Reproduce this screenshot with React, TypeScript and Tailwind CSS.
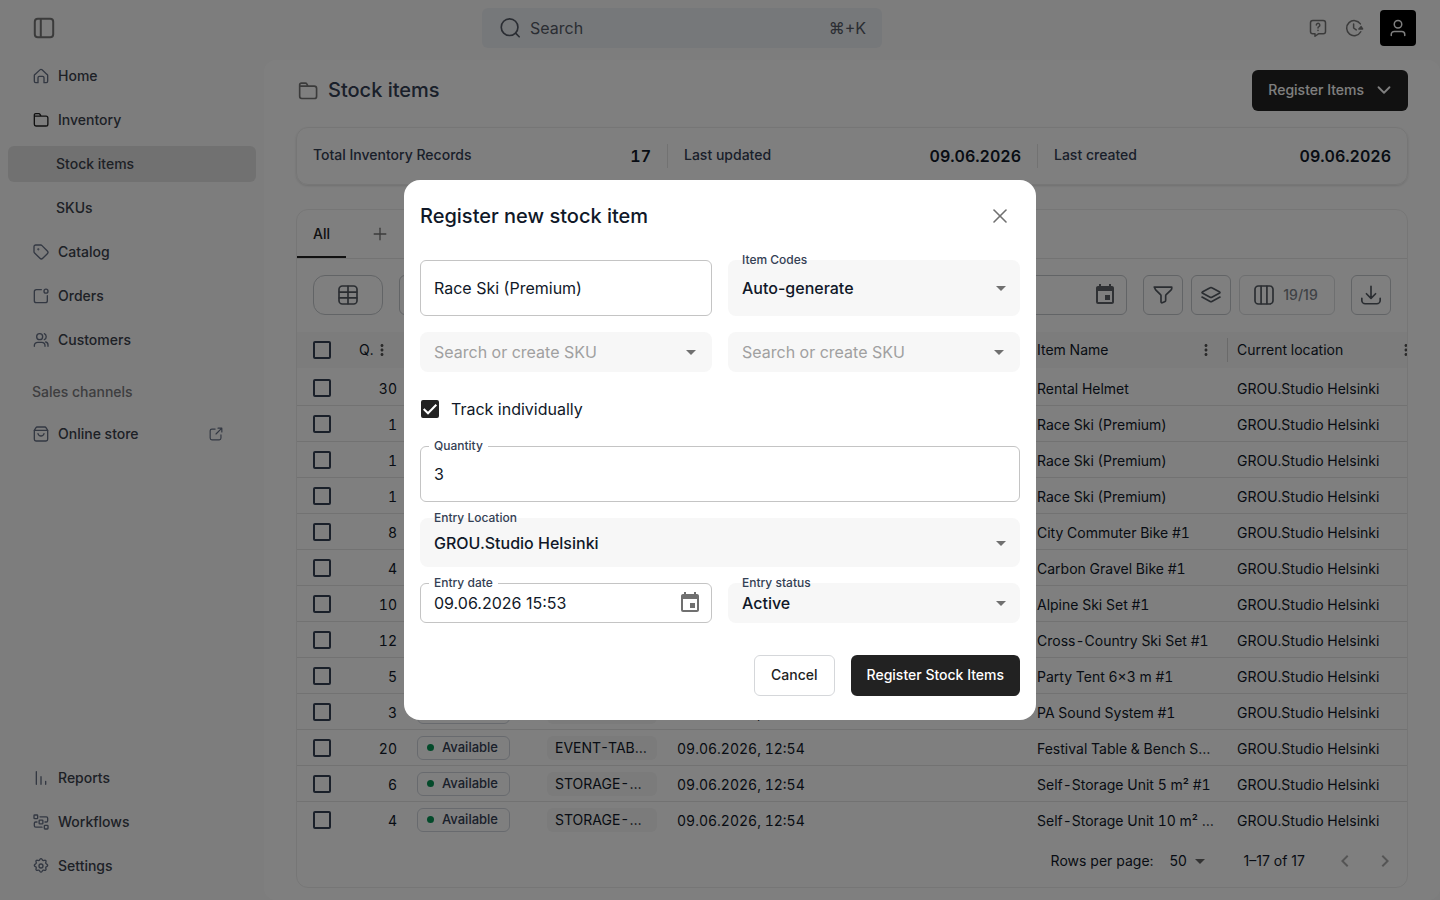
import { ReactNode, useState } from "react";
import clsx from "clsx";
import { ChevronDown, Plus, X } from "lucide-react";
import { MdArrowDropDown, MdChevronLeft, MdChevronRight, MdEvent, MdMoreVert } from "react-icons/md";

const icons: Record<string, ReactNode> = {
  panel: (
    <>
      <rect x="2.8" y="2.8" width="18.4" height="18.4" rx="3" />
      <path d="M8.8 3v18" />
    </>
  ),
  home: <path d="M3 9.6 10.4 2.8a2.4 2.4 0 0 1 3.2 0L21 9.6a2 2 0 0 1 1 1.8V20a2 2 0 0 1-2 2h-3.5v-7.5a2 2 0 0 0-2-2h-5a2 2 0 0 0-2 2V22H4a2 2 0 0 1-2-2v-8.600a2 2 0 0 1 1-1.800z" />,
  folder: <path d="M2 8V4.500a2 2 0 0 1 2-2h4.800a2 2 0 0 1 1.700 1L12 6.200H2.500M12 6.200h7.500a2.800 2.800 0 0 1 2.800 2.800v9.200a2.800 2.800 0 0 1-2.800 2.800h-15A2.800 2.800 0 0 1 2 18.200V6" />,
  tag: (
    <>
      <path d="M1.500 4a2.500 2.500 0 0 1 2.500-2.500h7.500a3 3 0 0 1 2 .9l8 8a3 3 0 0 1 0 4.200l-6.900 6.900a3 3 0 0 1-4.200 0l-8-8a3 3 0 0 1-.9-2z" />
      <circle cx="8" cy="8" r=".6" />
    </>
  ),
  orders: (
    <>
      <path d="M12.500 2.500H5A3 3 0 0 0 2 5.500V19a3 3 0 0 0 3 3h13.500a3 3 0 0 0 3-3v-7.500" />
      <circle cx="19.500" cy="4.800" r="3" />
    </>
  ),
  customers: (
    <>
      <circle cx="10" cy="7" r="4.500" />
      <path d="M17 2.500a5 5 0 0 1 0 9M2 21.500v-1a5 5 0 0 1 5-5h6a5 5 0 0 1 5 5v1M19 15a4.500 4.500 0 0 1 3.500 4.500v2" />
    </>
  ),
  store: (
    <>
      <path d="M2 6.500 4.500 2.600A2 2 0 0 1 6.200 1.500h11.600a2 2 0 0 1 1.700 1.100L22 6.500V20a2.500 2.500 0 0 1-2.500 2.500h-15A2.500 2.500 0 0 1 2 20z" />
      <path d="M2 6.500h20M7.500 11.500c.6 2.200 2.300 3.500 4.500 3.500s3.900-1.300 4.500-3.500" />
    </>
  ),
  external: <path d="M10.500 3.500H5a3 3 0 0 0-3 3V19a3 3 0 0 0 3 3h12.500a3 3 0 0 0 3-3v-5.500M15.500 2H22v6.500M22 2 12 12" />,
  reports: <path d="M5 2.500v19M12 10v11.500M19 17v4.500" />,
  workflows: (
    <>
      <rect x="1.500" y="1.500" width="5.500" height="5.500" rx="1" />
      <rect x="9.200" y="9.200" width="5.600" height="5.600" rx="1" />
      <rect x="17" y="17" width="5.500" height="5.500" rx="1" />
      <path d="M10.500 4.200H20a2 2 0 0 1 2 2V10a2 2 0 0 1-2 2h-2M13.500 19.800H4a2 2 0 0 1-2-2V14a2 2 0 0 1 2-2h2" />
    </>
  ),
  settings: (
    <>
      <circle cx="12" cy="12" r="3" />
      <path d="m10 2.800.5-.9a1.700 1.700 0 0 1 3 0l.5.900a2 2 0 0 0 2.400.9l1-.3a1.700 1.700 0 0 1 2.100 2.100l-.3 1a2 2 0 0 0 1 2.500l.9.500a1.700 1.700 0 0 1 0 3l-.9.500a2 2 0 0 0-1 2.500l.3 1a1.700 1.700 0 0 1-2.100 2.100l-1-.3a2 2 0 0 0-2.400 1l-.5.900a1.700 1.700 0 0 1-3 0l-.5-.9a2 2 0 0 0-2.400-1l-1 .3a1.700 1.700 0 0 1-2.100-2.100l.3-1a2 2 0 0 0-1-2.500l-.9-.5a1.700 1.700 0 0 1 0-3l.9-.5a2 2 0 0 0 1-2.500l-.3-1a1.700 1.700 0 0 1 2.100-2.100l1 .3a2 2 0 0 0 2.400-.9z" />
    </>
  ),
  search: (
    <>
      <circle cx="11.500" cy="11" r="10" />
      <path d="m19 18.500 4 4" />
    </>
  ),
  help: (
    <>
      <path d="M5 2h14a3 3 0 0 1 3 3v11.500a3 3 0 0 1-3 3h-6L8 23v-3.500H5a3 3 0 0 1-3-3V5a3 3 0 0 1 3-3z" />
      <path d="M9.800 8a2.300 2.300 0 1 1 3.400 2.100c-.8.400-1.200.9-1.200 1.900M12 15v.3" />
    </>
  ),
  history: (
    <>
      <path d="M20.500 6.500A10 10 0 1 0 21 17M11.500 6.500V12l3.500 2.500" />
      <path d="m18.500 13.200 2.900-3 2.100 3z" fill="currentColor" />
    </>
  ),
  user: (
    <>
      <circle cx="12" cy="7" r="5" />
      <path d="M3 22v-1.500a4 4 0 0 1 4-4h10a4 4 0 0 1 4 4V22" />
    </>
  ),
  grid: (
    <>
      <rect x="1.200" y="1.200" width="21.600" height="21.600" rx="4" />
      <path d="M1.500 8.500h21M1.500 15.500h21M12 1.500v21" />
    </>
  ),
  filter: <path d="M1.500 2.500h21v1.800a2 2 0 0 1-.7 1.500l-6 5.700a2 2 0 0 0-.6 1.400v5.300a2 2 0 0 1-1.200 1.800l-3 1.300a1 1 0 0 1-1.400-1v-7.400a2 2 0 0 0-.6-1.400l-5.800-5.700a2 2 0 0 1-.7-1.500z" />,
  layers: (
    <>
      <path d="M11 3.400 1.500 8.500a.6.6 0 0 0 0 1L11 14.600a2 2 0 0 0 2 0l9.500-5.100a.6.6 0 0 0 0-1L13 3.400a2 2 0 0 0-2 0z" />
      <path d="m1.200 14.500 9.800 5.300a2 2 0 0 0 2 0l9.800-5.300" />
    </>
  ),
  columns: (
    <>
      <rect x="1.200" y="1.200" width="21.600" height="21.600" rx="4" />
      <path d="M8.500 1.500v21M15.500 1.500v21" />
    </>
  ),
  download: <path d="M12 1.500v14M6.500 10.500 12 16l5.500-5.500M1 16v2.500a4 4 0 0 0 4 4h14a4 4 0 0 0 4-4V16" />,
};

function Icon({ name, className = "size-4" }: { name: string; className?: string }) {
  return (
    <svg
      viewBox="0 0 24 24"
      fill="none"
      stroke="currentColor"
      strokeWidth={2}
      strokeLinecap="round"
      strokeLinejoin="round"
      aria-hidden="true"
      className={clsx("shrink-0 overflow-visible", className)}
    >
      {icons[name]}
    </svg>
  );
}

function NavLink({ icon, label, active, dark, external }: { icon?: string; label: string; active?: boolean; dark?: boolean; external?: boolean }) {
  return (
    <a
      href="#"
      className={clsx(
        "flex h-9 items-center rounded-md pr-8 text-sm font-medium text-[#3c424d]",
        icon ? "gap-[9px] pl-[25px]" : "pl-12",
        active && "bg-[#e2e2e2]"
      )}
    >
      {icon && <Icon name={icon} className={clsx("size-4", dark ? "text-[#222222]" : "text-[#667085]")} />}
      {label}
      {external && <Icon name="external" className="ml-auto size-4 p-px text-[#667085]" />}
    </a>
  );
}

function Sidebar() {
  return (
    <nav className="flex w-[264px] shrink-0 flex-col gap-2 px-2 pt-[2px] pb-4">
      <NavLink icon="home" label="Home" />
      <NavLink icon="folder" label="Inventory" dark />
      <NavLink label="Stock items" active />
      <NavLink label="SKUs" />
      <NavLink icon="tag" label="Catalog" />
      <NavLink icon="orders" label="Orders" />
      <NavLink icon="customers" label="Customers" />
      <div className="mt-2 px-6 py-2 text-sm font-medium text-[#7c7c80]">Sales channels</div>
      <div className="-mt-[2px]">
        <NavLink icon="store" label="Online store" external />
      </div>
      <div className="mt-auto flex flex-col gap-2">
        <NavLink icon="reports" label="Reports" />
        <NavLink icon="workflows" label="Workflows" />
        <NavLink icon="settings" label="Settings" />
      </div>
    </nav>
  );
}

function TopBar() {
  return (
    <header className="flex h-14 items-center justify-between px-6">
      <button aria-label="Toggle sidebar" className="flex size-10 items-center justify-center text-[#777777]">
        <Icon name="panel" className="size-6" />
      </button>
      <label className="flex h-10 w-[400px] items-center gap-2 rounded-md bg-[#edf0f4] px-4 text-[#555b66]">
        <Icon name="search" className="size-6 p-[2px]" />
        <input
          placeholder="Search"
          aria-label="Search"
          className="min-w-0 flex-1 bg-transparent text-base outline-none placeholder:text-[#555b66]"
        />
        <span className="text-base">⌘+K</span>
      </label>
      <div className="flex items-center text-[#777777]">
        <button aria-label="Help" className="flex size-9 items-center justify-center">
          <Icon name="help" className="size-[18px]" />
        </button>
        <button aria-label="History" className="flex size-9 items-center justify-center">
          <Icon name="history" className="size-[18px]" />
        </button>
        <button aria-label="Account" className="ml-2 flex size-9 items-center justify-center rounded bg-black text-white">
          <Icon name="user" className="size-[18px]" />
        </button>
      </div>
    </header>
  );
}

const stats = [
  { label: "Total Inventory Records", value: "17" },
  { label: "Last updated", value: "09.06.2026" },
  { label: "Last created", value: "09.06.2026" },
];

const rows = [
  { qty: 30, code: "RENTAL-HELMET", name: "Rental Helmet" },
  { qty: 1, code: "RACE-SKI-PREMIUM", name: "Race Ski (Premium)" },
  { qty: 1, code: "RACE-SKI-PREMIUM", name: "Race Ski (Premium)" },
  { qty: 1, code: "RACE-SKI-PREMIUM", name: "Race Ski (Premium)" },
  { qty: 8, code: "CITY-COMMUTER", name: "City Commuter Bike #1" },
  { qty: 4, code: "CARBON-GRAVEL", name: "Carbon Gravel Bike #1" },
  { qty: 10, code: "ALPINE-SKI-SET", name: "Alpine Ski Set #1" },
  { qty: 12, code: "CROSS-COUNTRY", name: "Cross-Country Ski Set #1" },
  { qty: 5, code: "PARTY-TENT-6X3", name: "Party Tent 6×3 m #1" },
  { qty: 3, code: "PA-SOUND-SYSTEM", name: "PA Sound System #1" },
  { qty: 20, code: "EVENT-TABLE-BENCH", name: "Festival Table & Bench Set #1" },
  { qty: 6, code: "STORAGE-UNIT-5", name: "Self-Storage Unit 5 m² #1" },
  { qty: 4, code: "STORAGE-UNIT-10", name: "Self-Storage Unit 10 m² #1" },
];

const headCell = "border-b-2 border-white bg-[#f9f9f9] px-[10px] font-normal";

function HeadCell({ label }: { label: string }) {
  return (
    <th className={headCell}>
      <div className="flex items-center justify-between pr-[2px]">
        {label}
        <MdMoreVert className="size-[18px] text-[#555555]" />
      </div>
    </th>
  );
}

function RowCheckbox({ label }: { label: string }) {
  return (
    <input
      type="checkbox"
      aria-label={label}
      className="mx-auto block size-[18px] appearance-none rounded-[2px] border-2 border-[#344054] checked:bg-[#344054]"
    />
  );
}

function StockTable() {
  return (
    <div className="overflow-hidden">
      <table className="w-[1130px] min-w-full table-fixed border-separate border-spacing-0 text-left text-sm text-[#101828] tabular-nums">
        <colgroup>
          <col className="w-[50px]" />
          <col className="w-[60px]" />
          <col className="w-[130px]" />
          <col className="w-[130px]" />
          <col className="w-[180px]" />
          <col className="w-[180px]" />
          <col className="w-[200px]" />
          <col className="w-[200px]" />
        </colgroup>
        <thead>
          <tr className="h-[38px]">
            <th className="border-b-2 border-white bg-[#f9f9f9]">
              <RowCheckbox label="Select all rows" />
            </th>
            <th className="border-b-2 border-white bg-[#f9f9f9] pl-3 font-normal">
              <div className="flex items-center">
                Q.
                <MdMoreVert className="size-[18px] text-[#555555]" />
              </div>
            </th>
            <HeadCell label="Status" />
            <HeadCell label="SKU" />
            <HeadCell label="Created" />
            <HeadCell label="Updated" />
            <HeadCell label="Item Name" />
            <th className="border-b-2 border-white bg-[#f9f9f9] font-normal">
              <div className="flex h-6 items-center justify-between border-l border-[#d4d4d4] pr-3 pl-[9px]">
                Current location
                <MdMoreVert className="size-[18px] text-[#555555]" />
              </div>
            </th>
          </tr>
        </thead>
        <tbody className="[&>tr:not(:last-child)>td]:border-b [&>tr:not(:last-child)>td]:border-[#e4e4e4]">
          {rows.map((row, i) => (
            <tr key={i} className="h-9">
              <td>
                <RowCheckbox label={`Select ${row.name}`} />
              </td>
              <td className="px-[10px] pt-[2px] text-right">{row.qty}</td>
              <td className="px-[10px]">
                <span className="flex h-6 w-fit items-center gap-2 rounded-md border border-[#d0d5dd] pr-[11px] pb-px pl-[9px] text-[13px] font-medium text-[#344054]">
                  <i className="size-[7px] rounded-full bg-[#079455]" />
                  Available
                </span>
              </td>
              <td className="px-[10px]">
                <span className="block h-6 w-[110px] truncate rounded-md bg-[#f6f6f6] px-2 leading-6">{row.code}</span>
              </td>
              <td className="px-[10px] pt-[2px]">09.06.2026, 12:54</td>
              <td />
              <td className="truncate px-[10px] pt-[2px]">{row.name}</td>
              <td className="truncate px-[10px] pt-[2px]">GROU.Studio Helsinki</td>
            </tr>
          ))}
        </tbody>
      </table>
    </div>
  );
}

function ToolButton({ icon, label }: { icon: string; label: string }) {
  return (
    <button aria-label={label} className="flex size-10 items-center justify-center rounded-md border border-[#c4c8cc] text-[#555b63]">
      <Icon name={icon} className="size-5" />
    </button>
  );
}

function StockPage() {
  return (
    <main className="mt-1 flex min-w-0 flex-1 flex-col rounded-xl bg-white px-8 pt-[10px] pb-3">
      <div className="flex items-center gap-[10px]">
        <Icon name="folder" className="ml-[2px] size-5 text-[#777777]" />
        <h1 className="flex-1 pb-[2px] text-xl font-medium text-[#344054]">Stock items</h1>
        <button className="flex h-[41px] items-center gap-2 rounded-md bg-[#222222] px-4 pb-[2px] text-sm font-medium text-white">
          Register Items
          <ChevronDown className="-mr-1 size-6 p-[1px]" strokeWidth={2} />
        </button>
      </div>

      <section className="mt-4 grid h-[58px] grid-cols-3 items-center rounded-xl border border-[#ededed] shadow-sm">
        {stats.map((stat, i) => (
          <div
            key={stat.label}
            className={clsx("flex h-6 items-center justify-between px-4", i > 0 && "border-l border-[#e4e4e4]")}
          >
            <span className="pb-[2px] text-sm font-medium text-[#344054]">{stat.label}</span>
            <span className="text-base font-semibold text-[#101828] tabular-nums">{stat.value}</span>
          </div>
        ))}
      </section>

      <section className="mt-6 rounded-xl border border-[#ededed]">
        <div className="flex h-[49px] border-b border-[#e7e7e7] text-sm font-medium">
          <button className="h-12 border-b-2 border-[#222222] px-4 pt-[2px] text-[#222222]">All</button>
          <button aria-label="Add view" className="ml-6 text-[#777777]">
            <Plus className="size-5" strokeWidth={1.6} />
          </button>
        </div>

        <div className="flex items-center gap-4 p-4 pb-[17px]">
          <button aria-label="Table view" className="flex h-10 w-[70px] items-center justify-center rounded-xl border border-[#c4c8cc] text-[#555b63]">
            <Icon name="grid" className="size-5" />
          </button>
          <label className="flex h-10 flex-1 items-center rounded-md border border-[#c4c8cc] px-[9px]">
            <input aria-label="Date range" className="min-w-0 flex-1 bg-transparent px-2 outline-none" />
            <MdEvent className="size-6 text-[#5f6368]" />
          </label>
          <div className="flex gap-2">
            <ToolButton icon="filter" label="Filter" />
            <ToolButton icon="layers" label="Group" />
            <button className="flex h-10 w-24 items-center justify-center gap-[9px] rounded-md border border-[#dcdee0] pr-[2px] text-sm font-medium text-[#80858c]">
              <Icon name="columns" className="size-5 text-[#555b63]" />
              19/19
            </button>
          </div>
          <ToolButton icon="download" label="Download" />
        </div>

        <StockTable />

        <div className="flex h-[49px] items-center justify-end pr-[10px] pb-1 text-sm text-[#101828]">
          <label htmlFor="page-size">Rows per page:</label>
          <span className="relative ml-4 flex items-center">
            <select id="page-size" defaultValue="50" className="appearance-none bg-transparent pr-5 outline-none">
              <option>50</option>
            </select>
            <MdArrowDropDown className="pointer-events-none absolute -right-1 size-6 text-[#666666]" />
          </span>
          <span className="ml-9">1–17 of 17</span>
          <button aria-label="Previous page" className="ml-7 text-[#aaaaaa]">
            <MdChevronLeft className="size-6" />
          </button>
          <button aria-label="Next page" className="ml-4 text-[#aaaaaa]">
            <MdChevronRight className="size-6" />
          </button>
        </div>
      </section>
    </main>
  );
}

function FieldLabel({ id, text, notch }: { id: string; text: string; notch?: boolean }) {
  return (
    <label
      htmlFor={id}
      className={clsx(
        "absolute px-[5px] text-xs font-medium text-[#344054]",
        notch ? "-top-[9px] left-2 bg-white" : "-top-2 left-[9px]"
      )}
    >
      {text}
    </label>
  );
}

function TextField({ id, label, name, value, height, icon }: { id: string; label?: string; name?: string; value: string; height: string; icon?: ReactNode }) {
  return (
    <div className={clsx("relative flex items-center rounded-md border border-[#c4c4c4] pr-[9px]", height)}>
      {label && <FieldLabel id={id} text={label} notch />}
      <input
        id={id}
        aria-label={name}
        defaultValue={value}
        className="h-full min-w-0 flex-1 bg-transparent pl-[13px] text-base text-[#101828] outline-none"
      />
      {icon}
    </div>
  );
}

function SelectField({ id, label, value, height }: { id: string; label: string; value: string; height: string }) {
  return (
    <div className={clsx("relative flex items-center rounded-lg bg-[#f7f7f7]", height)}>
      <FieldLabel id={id} text={label} />
      <select
        id={id}
        defaultValue={value}
        className="h-full w-full appearance-none bg-transparent px-[14px] text-base font-medium text-[#101828] outline-none"
      >
        <option>{value}</option>
      </select>
      <MdArrowDropDown className="pointer-events-none absolute right-[7px] size-6 text-[#707070]" />
    </div>
  );
}

function SkuField({ name }: { name: string }) {
  return (
    <div className="flex h-10 items-center rounded-lg bg-[#f7f7f7] pr-[9px] pl-[14px]">
      <input
        aria-label={name}
        placeholder="Search or create SKU"
        className="min-w-0 flex-1 bg-transparent text-base outline-none placeholder:text-[#a0a0a0]"
      />
      <button aria-label={`Open ${name} options`}>
        <MdArrowDropDown className="size-6 text-[#707070]" />
      </button>
    </div>
  );
}

function RegisterDialog() {
  const [tracked, setTracked] = useState(true);

  return (
    <div className="fixed inset-0 z-10 flex items-center justify-center bg-black/50">
      <div role="dialog" aria-labelledby="dialog-title" className="w-full max-w-[632px] rounded-2xl bg-white px-4 pb-6">
        <div className="flex h-20 items-center justify-between pb-2">
          <h2 id="dialog-title" className="text-xl font-medium text-[#101828]">Register new stock item</h2>
          <button aria-label="Close" className="flex size-10 items-center justify-center text-[#707070]">
            <X className="size-6" strokeWidth={1.6} />
          </button>
        </div>

        <div className="grid grid-cols-2 gap-4">
          <TextField id="item-name" name="Item name" value="Race Ski (Premium)" height="h-14" />
          <SelectField id="item-codes" label="Item Codes" value="Auto-generate" height="h-14" />
          <SkuField name="Product SKU" />
          <SkuField name="Variant SKU" />
          <label className="col-span-2 flex h-[42px] items-center gap-3 pl-px text-base text-[#101828]">
            <span className="grid size-[18px] place-items-center">
              <input
                type="checkbox"
                checked={tracked}
                onChange={(e) => setTracked(e.target.checked)}
                className="col-start-1 row-start-1 size-[18px] appearance-none rounded-[2px] border-2 border-[#222222] checked:bg-[#222222]"
              />
              {tracked && (
                <svg viewBox="0 0 18 18" className="pointer-events-none col-start-1 row-start-1 size-[18px]" aria-hidden="true">
                  <path d="m2.700 9 4.300 4.300 8.300-8.600" fill="none" stroke="white" strokeWidth="2" />
                </svg>
              )}
            </span>
            Track individually
          </label>
          <div className="col-span-2">
            <TextField id="quantity" label="Quantity" value="3" height="h-14" />
          </div>
          <div className="col-span-2">
            <SelectField id="entry-location" label="Entry Location" value="GROU.Studio Helsinki" height="h-[49px]" />
          </div>
          <TextField
            id="entry-date"
            label="Entry date"
            value="09.06.2026 15:53"
            height="h-10"
            icon={<MdEvent className="size-6 text-[#707070]" />}
          />
          <SelectField id="entry-status" label="Entry status" value="Active" height="h-10" />
        </div>

        <div className="mt-8 flex justify-end gap-4 text-sm font-medium">
          <button className="h-[41px] rounded-md border border-[#d5d7da] px-4 pb-[2px] text-[#222222]">Cancel</button>
          <button className="h-[41px] rounded-md bg-[#222222] px-4 pb-[2px] text-white">Register Stock Items</button>
        </div>
      </div>
    </div>
  );
}

export default function App() {
  return (
    <div className="flex min-h-screen flex-col bg-[#fafafa] font-[Inter,'Noto_Sans',sans-serif]">
      <TopBar />
      <div className="flex flex-1">
        <Sidebar />
        <StockPage />
      </div>
      <RegisterDialog />
    </div>
  );
}
